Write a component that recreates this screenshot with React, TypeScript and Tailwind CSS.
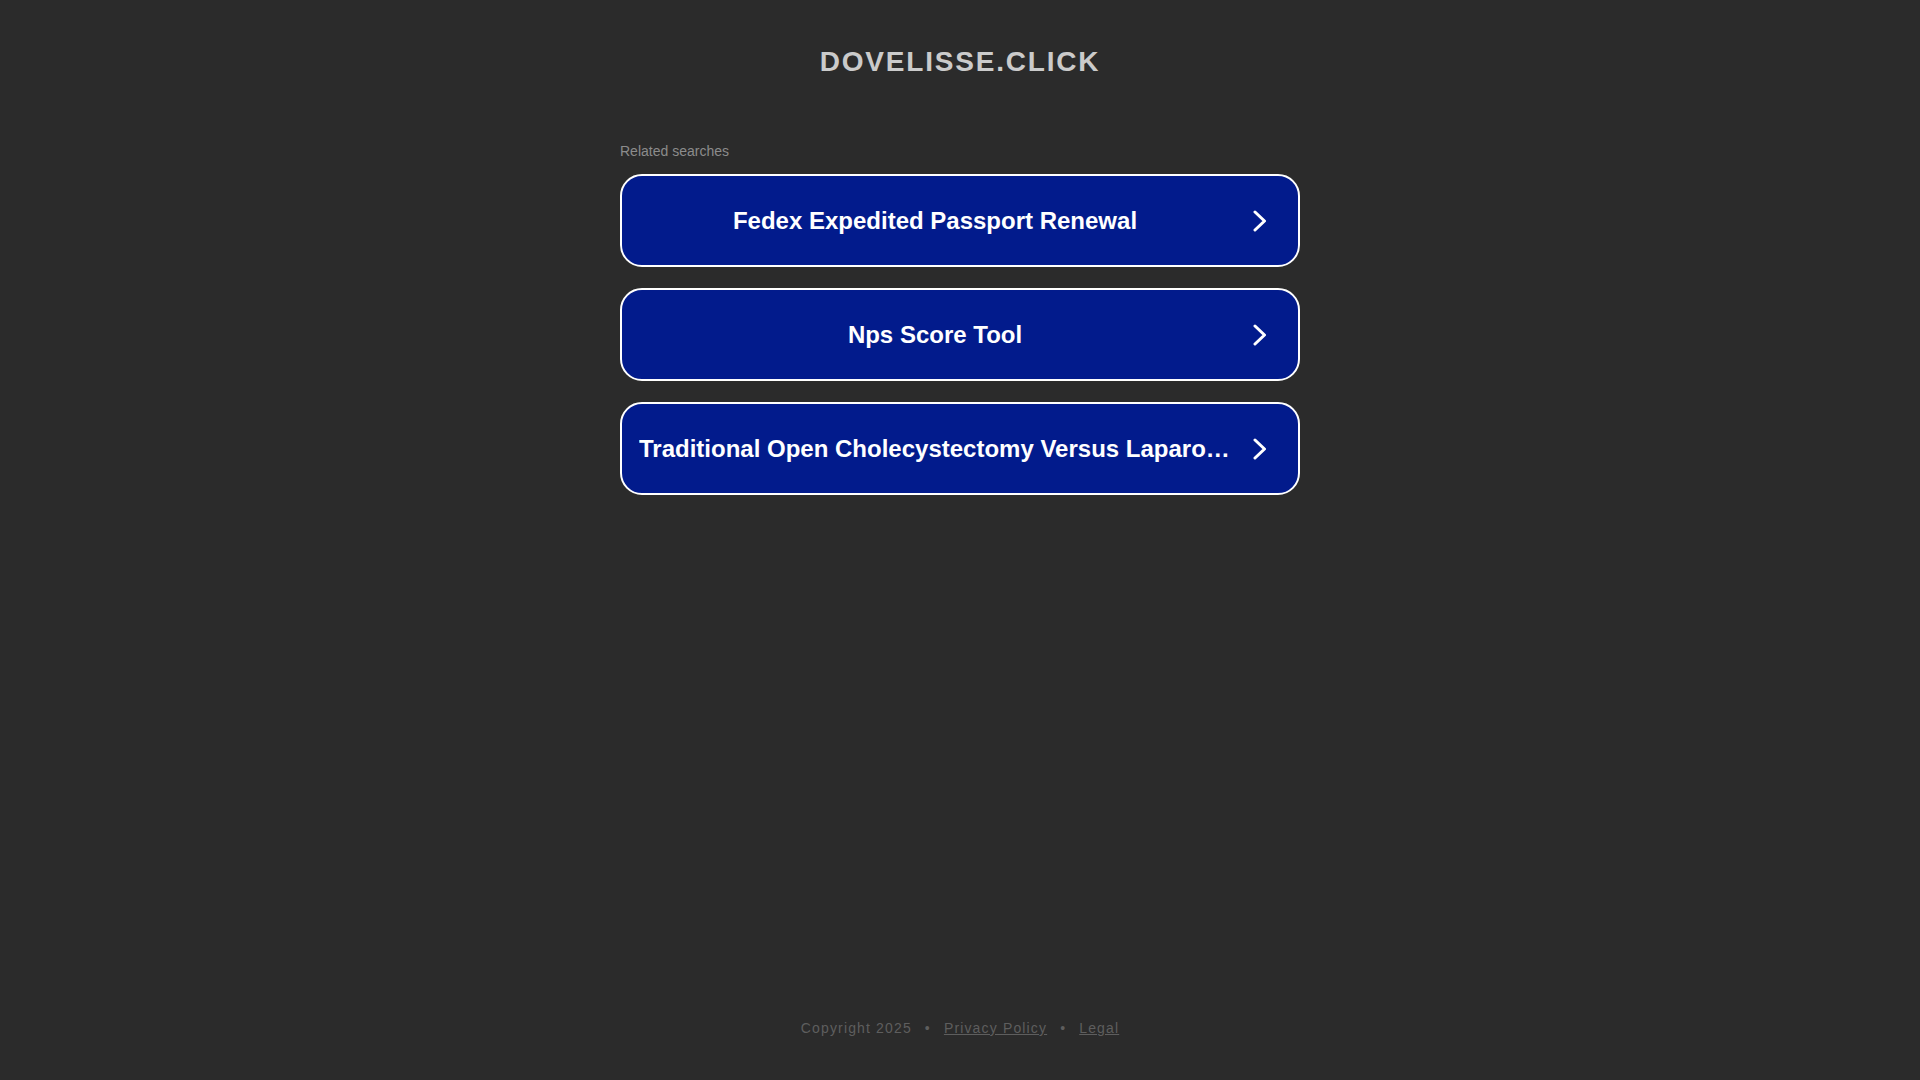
import React from "react";

const items = [
  "Fedex Expedited Passport Renewal",
  "Nps Score Tool",
  "Traditional Open Cholecystectomy Versus Laparoscopic Cholecystectomy",
];

function Chevron() {
  return (
    <svg width="14" height="22" viewBox="0 0 14 22" className="shrink-0 mr-[31px]" fill="none">
      <polyline points="2,2 11.5,11 2,20" stroke="#ffffff" strokeWidth="3" strokeLinecap="round" strokeLinejoin="round" />
    </svg>
  );
}

export default function App() {
  return (
    <div className="min-h-screen bg-[#2b2b2b] flex flex-col" style={{ fontFamily: '"Liberation Sans", Arial, sans-serif' }}>
      <div className="pt-[46px] text-center">
        <h1 className="text-[28px] leading-[32px] font-bold tracking-[1.8px] text-[#cbcbcb]">DOVELISSE.CLICK</h1>
      </div>
      <div className="w-[680px] mx-auto mt-[63px]">
        <div className="text-[14px] leading-[20px] text-[#8c8c8c]">Related searches</div>
        <div className="mt-[13px] flex flex-col gap-[21px]">
          {items.map((t) => (
            <a
              key={t}
              href="#"
              className="h-[93px] flex items-center bg-[#021b8c] border-2 border-white rounded-[22px] text-white"
            >
              <span className="flex-1 min-w-0 ml-[17px] mr-[22px] truncate text-center text-[24px] leading-[30px] font-bold">
                {t}
              </span>
              <Chevron />
            </a>
          ))}
        </div>
      </div>
      <div className="mt-auto pb-[42px] text-center text-[14px] leading-[20px] tracking-[1.15px] text-[#5e5e5e]">
        <span>Copyright 2025</span>
        <span className="mx-[13px]">•</span>
        <a href="#" className="underline">Privacy Policy</a>
        <span className="mx-[13px]">•</span>
        <a href="#" className="underline">Legal</a>
      </div>
    </div>
  );
}
